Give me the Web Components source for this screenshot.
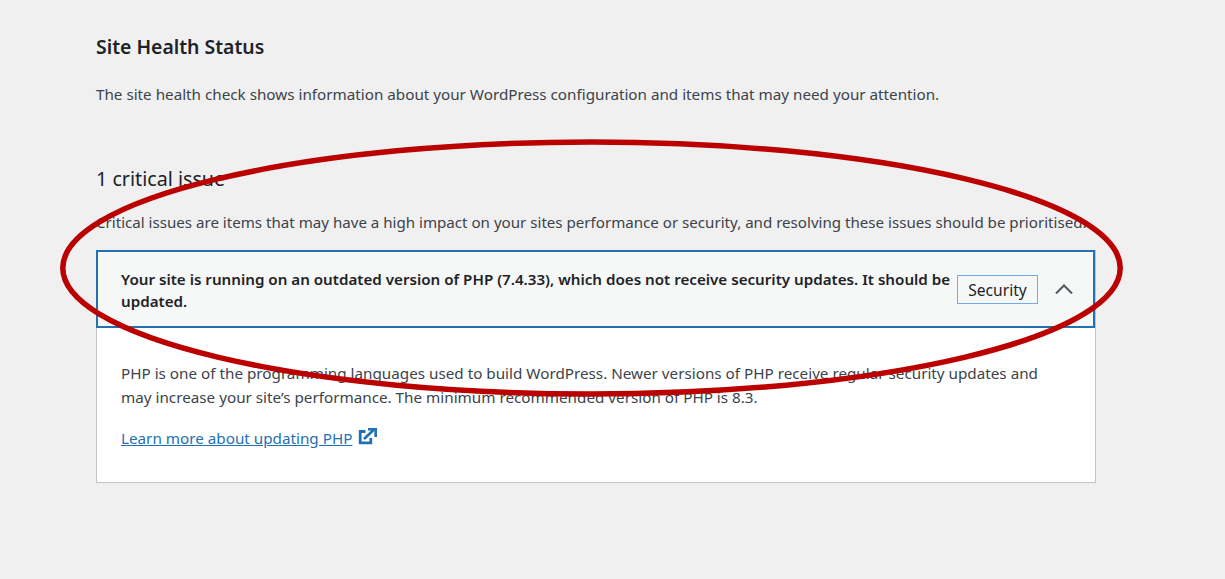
<!doctype html>
<html lang="en">
<head>
<meta charset="utf-8">
<title>Site Health Status</title>
<style>
  html, body { margin: 0; height: 100%; }
  body {
    background: #f0f0f1;
    color: #1d2327;
    font-family: "Noto Sans", "Open Sans", sans-serif;
    overflow: hidden;
  }
</style>
</head>
<body>
<site-health>
  <health-issue badge="Security">
    <span slot="title">Your site is running on an outdated version of PHP (7.4.33), which does not receive security updates. It should be updated.</span>
    <p>PHP is one of the programming languages used to build WordPress. Newer versions of PHP receive regular security updates and may increase your site’s performance. The minimum recommended version of PHP is 8.3.</p>
    <external-link href="#">Learn more about updating PHP</external-link>
  </health-issue>
</site-health>
<red-ellipse></red-ellipse>

<script>
class SiteHealth extends HTMLElement {
  constructor() {
    super();
    this.attachShadow({ mode: "open" });
    this.shadowRoot.innerHTML = /* html */`
    <style>
      :host {
        display: block;
        width: 1000px;
        padding: 34px 0 0 96px;
      }
      h2, h3, p { margin: 0; font-weight: 400; }
      h2 { font-size: 19.4px; font-weight: 600; line-height: 26px; }
      h3 { font-size: 19.7px; line-height: 26px; margin-top: 61px; }
      p { font-size: 15.22px; line-height: 22px; color: #3c434a; }
      .intro { margin-top: 23px; }
      .critical { margin-top: 19px; margin-bottom: 17px; font-size: 15.12px; white-space: nowrap; }
    </style>
    <h2>Site Health Status</h2>
    <p class="intro">The site health check shows information about your WordPress configuration and items that may need your attention.</p>
    <h3>1 critical issue</h3>
    <p class="critical">Critical issues are items that may have a high impact on your sites performance or security, and resolving these issues should be prioritised.</p>
    <slot></slot>
    `;
  }
}

class HealthIssue extends HTMLElement {
  constructor() {
    super();
    this.attachShadow({ mode: "open" });
  }

  connectedCallback() {
    this.shadowRoot.innerHTML = /* html */`
    <style>
      :host { display: block; border-right: 1px solid #c3c4c7; box-sizing: border-box; }
      .head {
        display: flex;
        align-items: center;
        box-sizing: border-box;
        height: 78px;
        padding: 0 20px 0 23px;
        background: #f6f7f7;
        border: 2px solid #2271b1;
      }
      .title {
        flex: 1;
        font-size: 15.17px;
        font-weight: 600;
        line-height: 22px;
        color: #1d2327;
        margin-top: 2px;
      }
      .badge {
        box-sizing: border-box;
        width: 81px;
        height: 29px;
        margin: 0 17px 0 4px;
        border: 1px solid #72aee6;
        font-size: 15.6px;
        line-height: 28px;
        text-align: center;
      }
      svg { display: block; }
      .body {
        box-sizing: border-box;
        height: 155px;
        padding: 33px 40px 0 24px;
        background: #fff;
        border-left: 1px solid #c3c4c7;
        border-bottom: 1px solid #c3c4c7;
        font-size: 15.24px;
        line-height: 24px;
        color: #3c434a;
      }
      ::slotted(p) { margin: 0 0 17px; }
    </style>
    <div class="head">
      <div class="title"><slot name="title"></slot></div>
      <div class="badge">${this.getAttribute("badge")}</div>
      <svg width="18" height="10" viewBox="0 0 18 10"><path d="M1 9.5 9 1.5l8 8" fill="none" stroke="#50575e" stroke-width="2"/></svg>
    </div>
    <div class="body"><slot></slot></div>
    `;
  }
}

class ExternalLink extends HTMLElement {
  constructor() {
    super();
    this.attachShadow({ mode: "open" });
    this.shadowRoot.innerHTML = /* html */`
    <style>
      :host { display: flex; align-items: center; gap: 6px; }
      a { color: #2271b1; text-decoration: underline; }
      svg { display: block; margin-top: -3px; }
    </style>
    <a href="#"><slot></slot></a>
    <svg width="19" height="18" viewBox="0 0 19 18">
      <path d="M7.5 3.5H2.2v11.4h10.6V10" fill="none" stroke="#2271b1" stroke-width="2.8"/>
      <path d="M6 11 15.5 2M10 1.3h7.7V9" fill="none" stroke="#2271b1" stroke-width="2.6"/>
    </svg>
    `;
  }
}

class RedEllipse extends HTMLElement {
  constructor() {
    super();
    this.attachShadow({ mode: "open" });
    this.shadowRoot.innerHTML = /* html */`
    <style>
      :host { position: absolute; inset: 0; pointer-events: none; }
      svg { display: block; }
    </style>
    <svg width="1225" height="579" viewBox="0 0 1225 579">
      <ellipse cx="591.5" cy="268" rx="528.7" ry="126" fill="none" stroke="#bb0000" stroke-width="5.5"/>
    </svg>
    `;
  }
}

customElements.define("site-health", SiteHealth);
customElements.define("health-issue", HealthIssue);
customElements.define("external-link", ExternalLink);
customElements.define("red-ellipse", RedEllipse);
</script>
</body>
</html>
